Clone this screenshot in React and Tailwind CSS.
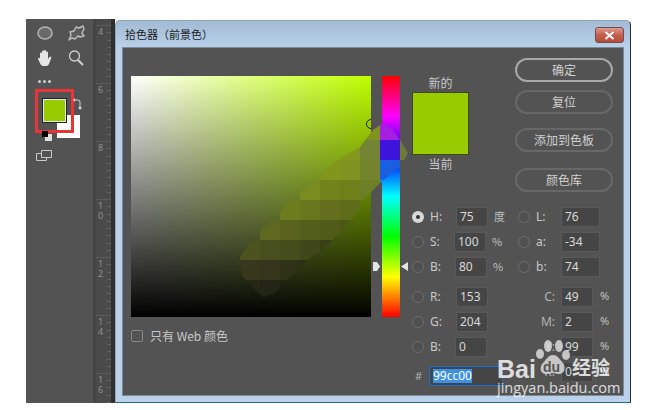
import React from 'react';

const cjk = { fontFamily: '"Noto Sans CJK SC", "Noto Sans", sans-serif' };

function Radio({ checked }) {
  return (
    <span className={`w-3 h-3 rounded-full shrink-0 flex items-center justify-center ${checked ? 'bg-[#d8d8d8]' : 'border border-[#6e6e6e] bg-[#505050]'}`}>
      {checked && <span className="w-1 h-1 rounded-full bg-[#333]" />}
    </span>
  );
}

function Input({ value, width }) {
  return (
    <div className="h-5 bg-[#454545] border border-[#5a5a5a] pl-[3px] text-[12px] leading-[18px] text-[#d8d8d8] shrink-0" style={{ width }}>
      {value}
    </div>
  );
}

function LeftField({ label, value, checked, unit, inputMl }) {
  return (
    <div className="h-[25px] flex items-center">
      <Radio checked={checked} />
      <span className="w-[20px] pl-[6px] text-[12px] text-[#c8c8c8]">{label}</span>
      <div style={{ marginLeft: inputMl }}>
        <Input value={value} width={32} />
      </div>
      {unit && <span className="ml-[6px] text-[11px] text-[#c0c0c0]" style={cjk}>{unit}</span>}
    </div>
  );
}

function LabField({ label, value }) {
  return (
    <div className="h-[25px] flex items-center">
      <Radio />
      <span className="w-[31px] pl-[6px] text-[12px] text-[#c8c8c8]">{label}</span>
      <Input value={value} width={39} />
    </div>
  );
}

function CmykField({ label, value }) {
  return (
    <div className="h-[25px] flex items-center">
      <span className="w-[43px] pr-[6px] text-right text-[12px] text-[#b4b4b4]">{label}</span>
      <Input value={value} width={32} />
      <span className="ml-[7px] text-[11px] text-[#c0c0c0]">%</span>
    </div>
  );
}

function DialogButton({ children, className = '' }) {
  return (
    <div className={`h-6 w-[98px] rounded-full border-2 flex items-center justify-center text-[12px] text-[#d0d0d0] ${className}`} style={cjk}>
      {children}
    </div>
  );
}

function Smudge() {
  const rows = [
    { y: 120, cells: [[360, '#7f9420'], [380, '#a51fe0']] },
    { y: 140, cells: [[340, '#84981e'], [360, '#748434'], [380, '#3c14dc'], [400, '#6f7a3a']] },
    { y: 160, cells: [[320, '#82951c'], [340, '#80921f'], [360, '#74842c'], [380, '#1a5fe0']] },
    { y: 180, cells: [[300, '#7a8b1f'], [320, '#72831c'], [340, '#6f801b'], [360, '#6e7e26'], [380, '#1a8ff0']] },
    { y: 200, cells: [[280, '#6d7c1e'], [300, '#68761c'], [320, '#636f1c'], [340, '#5f6d1a']] },
    { y: 220, cells: [[260, '#5e6820'], [280, '#59631d'], [300, '#545e1b'], [320, '#505a19'], [340, '#4c5617']] },
    { y: 240, cells: [[240, '#4c5320'], [260, '#484f1e'], [280, '#464d1d'], [300, '#40471a'], [320, '#3a4016']] },
    { y: 260, cells: [[220, '#3a3d1f'], [240, '#38391c'], [260, '#35361b'], [280, '#2f3216'], [300, '#2b2e13']] },
    { y: 280, cells: [[240, '#252817'], [260, '#232616'], [280, '#1f2212']] },
  ];
  return (
    <svg className="absolute left-0 top-0" width="280" height="241" viewBox="131 76 280 241">
      <defs>
        <clipPath id="smudge">
          <polygon points="383,123 393,130 400,140 408,153 400,167 380,183 363,200 353,217 330,243 307,260 287,280 275,293 263,297 243,277 238,260 253,237 275,217 290,200 317,180 337,160 360,147 373,130" />
        </clipPath>
      </defs>
      <g clipPath="url(#smudge)">
        {rows.map((r) =>
          r.cells.map(([x, fill]) => <rect key={`${x}-${r.y}`} x={x} y={r.y} width="20" height="20" fill={fill} />)
        )}
      </g>
    </svg>
  );
}

function Ruler() {
  const marks = [['4'], ['6'], ['8'], ['1', '0'], ['1', '2'], ['1', '4'], ['1', '6']];
  return (
    <div className="w-[18px] bg-[#4a4a4a] border-l-[3px] border-[#444] overflow-hidden shrink-0 flex flex-col">
      <div className="h-[6px] shrink-0" />
      {marks.map((m, i) => (
        <div key={i} className="h-[58px] shrink-0 border-t border-[#5c5c5c] bg-[repeating-linear-gradient(to_bottom,transparent_0,transparent_6.25px,#636363_6.25px,#636363_7.25px)] bg-[length:4px_100%] bg-right bg-no-repeat">
          <div className="pl-[2px] text-[9px] leading-[10px] text-[#929292] pt-[1px]">
            {m.map((d, j) => <div key={j}>{d}</div>)}
          </div>
        </div>
      ))}
    </div>
  );
}

function ToolPanel() {
  return (
    <div className="w-[67px] bg-[#535353] shrink-0">
      <div className="grid grid-cols-2 pl-[9px] pt-[4px] w-[60px] gap-x-[10px] gap-y-[5px]">
        <svg width="20" height="20" viewBox="0 0 20 20"><ellipse cx="10" cy="10" rx="7" ry="6" fill="#6a6a6a" stroke="#b5b5b5" strokeWidth="1.5" /></svg>
        <svg width="20" height="20" viewBox="0 0 20 20"><path d="M3 17L5 12 4 9 8 8 10 4 13 5 17 3 18 6 16 10 18 13 14 14 12 13 9 16 6 15Z" fill="#5c5c5c" stroke="#bdbdbd" strokeWidth="1.4" strokeLinejoin="round" /></svg>
        <svg width="20" height="20" viewBox="0 0 20 20"><path d="M5 11V5.5a1 1 0 012 0V9V3.5a1 1 0 012 0V9V3a1 1 0 012 0v6V4.5a1 1 0 012 0V11l1.5-2a1 1 0 011.7 1L14 16a3 3 0 01-3 2H9a4 4 0 01-4-3l-2-4a1 1 0 011.6-1z" fill="#e6e6e6" /></svg>
        <svg width="20" height="20" viewBox="0 0 20 20"><circle cx="8.5" cy="8" r="5" fill="none" stroke="#d0d0d0" strokeWidth="1.3" /><path d="M12 12l5 5" stroke="#d0d0d0" strokeWidth="2" /></svg>
      </div>
      <div className="flex gap-[2px] pl-[12px] mt-[12px]">
        <span className="w-[3px] h-[3px] rounded-full bg-[#cfcfcf]" />
        <span className="w-[3px] h-[3px] rounded-full bg-[#cfcfcf]" />
        <span className="w-[3px] h-[3px] rounded-full bg-[#cfcfcf]" />
      </div>
      <div className="relative h-[56px] mt-[9px]">
        <div className="absolute left-[31px] top-[23px] w-[23px] h-[23px] bg-white" />
        <div className="absolute left-[17px] top-[7px] w-[23px] h-[23px] bg-[#99cc00] border border-[#e8e8e8] outline outline-[#222]" />
        <div className="absolute left-[9px] top-[-3px] w-[39px] h-[44px] border-[3px] border-[#e8353a]" />
        <svg className="absolute left-[47px] top-[6px]" width="9" height="12" viewBox="0 0 9 12"><path d="M1 2h4a2 2 0 012 2v5" fill="none" stroke="#d8d8d8" /><path d="M0 2l2-2v4zM5 9h4l-2 3z" fill="#d8d8d8" /></svg>
        <div className="absolute left-[19px] top-[42px] w-[7px] h-[7px] bg-[#e0e0e0]" />
        <div className="absolute left-[16px] top-[39px] w-[6px] h-[6px] bg-black" />
      </div>
      <svg className="ml-[9px]" width="20" height="16" viewBox="0 0 20 16"><path d="M1.5 5.5h5M1.5 5.5v7h10v-3M6.5 2.5h10v7h-10z" fill="none" stroke="#c8c8c8" /></svg>
    </div>
  );
}

function Watermark() {
  return (
    <div className="absolute left-[497px] top-[340px] w-[118px] h-[58px] text-white">
      <span className="absolute left-0 top-[14px] text-[25px] leading-[30px] font-bold text-white/80" style={{ fontFamily: '"Liberation Sans", sans-serif' }}>Bai</span>
      <svg className="absolute left-[38px] top-0" width="36" height="40" viewBox="0 0 36 40">
        <g fill="#e4e4e4" fillOpacity="0.8">
          <ellipse cx="5" cy="14" rx="4" ry="5" />
          <ellipse cx="13" cy="6" rx="4" ry="6" />
          <ellipse cx="24" cy="6" rx="4" ry="6" />
          <ellipse cx="31" cy="15" rx="4" ry="5" />
          <path d="M18 15c5 0 7 5 10 8 3 4 2 11-4 11-3 0-4-1-6-1s-4 1-7 1c-6 0-7-7-3-11 3-3 5-8 10-8z" />
        </g>
      </svg>
      <span className="absolute left-[46px] top-[19px] text-[14px] leading-[16px] font-bold text-[#555]" style={{ fontFamily: '"Liberation Sans", sans-serif' }}>du</span>
      <span className="absolute left-[75px] top-[15px] text-[19px] leading-[24px] font-bold text-white/80" style={cjk}>经验</span>
      <span className="absolute left-0 top-[40px] text-[14.5px] leading-[16px] text-white/80" style={{ fontFamily: '"Open Sans", sans-serif' }}>jingyan.baidu.com</span>
    </div>
  );
}

export default function App() {
  return (
    <div className="relative w-[647px] h-[410px] bg-white overflow-hidden pt-[19px] pb-[7px] pl-[26px]" style={{ fontFamily: '"Noto Sans", sans-serif' }}>
      <div className="flex h-full">
        <ToolPanel />
        <Ruler />
        <div className="w-[4px] bg-[#2f2f2f] shrink-0" />
        <div className="w-[516px] shrink-0 mt-[1px] rounded-t-[5px] bg-[linear-gradient(to_bottom,#a3bad5_0,#b9d1ea_27px)] border border-[#8fa6bf] border-b-[#1d6f80] border-r-[#20303a] px-[6px] pb-[6px] flex flex-col">
          <div className="h-[26px] flex items-center justify-between shrink-0">
            <span className="text-[11px] text-[#1a1a1a] pl-[3px]" style={cjk}>拾色器（前景色）</span>
            <div className="w-[29px] h-[16px] mt-[2px] rounded-[3px] border border-[#7c4a44] bg-[linear-gradient(to_bottom,#dd9a8e,#c4604f_50%,#b54a3a)] flex items-center justify-center">
              <svg width="11" height="9" viewBox="0 0 11 9"><path d="M1.5 1l8 7M9.5 1l-8 7" stroke="#fff" strokeWidth="2" /></svg>
            </div>
          </div>
          <div className="flex-1 bg-[#535353] border border-[#7f8a96] flex pl-[8px] min-h-0">
            <div className="pt-[28px] w-[281px] shrink-0">
              <div className="relative w-[280px] flex h-[241px]">
                <div className="relative w-[240px] h-[241px] overflow-hidden bg-[#bfff00]">
                  <div className="absolute inset-0 bg-gradient-to-r from-white to-transparent" />
                  <div className="absolute inset-0 bg-gradient-to-b from-transparent to-black" />
                  <div className="absolute left-[235px] top-[43px] w-[10px] h-[10px] rounded-full border border-[#1c2200]" />
                </div>
                <div className="relative ml-[11px] w-[18px] h-[241px] bg-[linear-gradient(to_bottom,#ff0000,#ff00ff,#0000ff,#00ffff,#00ff00,#ffff00,#ff0000)]" />
                <Smudge />
                <svg className="absolute left-[242px] top-[186px]" width="8" height="9" viewBox="0 0 8 9"><path d="M0 0h4l3 4.5L4 9H0z" fill="#e4e4e4" /></svg>
                <svg className="absolute left-[270px] top-[186px]" width="7" height="9" viewBox="0 0 7 9"><path d="M7 0v9L0 4.5z" fill="#e4e4e4" /></svg>
              </div>
              <div className="flex items-center mt-[12px] h-[13px]">
                <span className="w-[12px] h-[12px] rounded-[2px] border border-[#8a8a8a]" />
                <span className="ml-[7px] text-[12px] text-[#c8c8c8]" style={cjk}>只有 Web 颜色</span>
              </div>
            </div>
            <div className="flex-1">
              <div className="h-[156px] pt-[10px] flex">
                <div className="w-[57px] pt-[18px]">
                  <div className="h-[16px] text-center text-[12px] leading-[14px] text-[#c8c8c8]" style={cjk}>新的</div>
                  <div className="h-[63px] bg-[#99cc00] border border-[#3f4a10]" />
                  <div className="h-[16px] mt-[2px] text-center text-[12px] leading-[14px] text-[#c8c8c8]" style={cjk}>当前</div>
                </div>
                <div className="ml-[46px]">
                  <DialogButton className="border-[#a8a8a8]">确定</DialogButton>
                  <DialogButton className="mt-[8px] border-[#686868]">复位</DialogButton>
                  <DialogButton className="mt-[14px] border-[#686868]">添加到色板</DialogButton>
                  <DialogButton className="mt-[16px] border-[#686868]">颜色库</DialogButton>
                </div>
              </div>
              <div className="flex">
                <div className="w-[106px] shrink-0">
                  <LeftField label="H:" value="75" checked unit="度" inputMl={12} />
                  <LeftField label="S:" value="100" unit="%" inputMl={10} />
                  <LeftField label="B:" value="80" unit="%" inputMl={11} />
                  <div className="mt-[5px]">
                    <LeftField label="R:" value="153" inputMl={12} />
                    <LeftField label="G:" value="204" inputMl={12} />
                    <LeftField label="B:" value="0" inputMl={11} />
                  </div>
                </div>
                <div>
                  <LabField label="L:" value="76" />
                  <LabField label="a:" value="-34" />
                  <LabField label="b:" value="74" />
                  <div className="mt-[5px]">
                    <CmykField label="C:" value="49" />
                    <CmykField label="M:" value="2" />
                    <CmykField label="Y:" value="99" />
                    <CmykField label="K:" value="0" />
                  </div>
                </div>
              </div>
              <div className="flex items-center h-[20px] mt-[-18px]">
                <span className="ml-[3px] w-[14px] text-[11px] text-[#b4b4b4]">#</span>
                <div className="w-[74px] h-[20px] border border-[#1e6fd0] bg-[#454545] pl-[3px] flex items-center">
                  <span className="bg-[#3d8fe8] text-white text-[12px] leading-[14px]">99cc00</span>
                </div>
              </div>
            </div>
          </div>
        </div>
      </div>
      <Watermark />
    </div>
  );
}
